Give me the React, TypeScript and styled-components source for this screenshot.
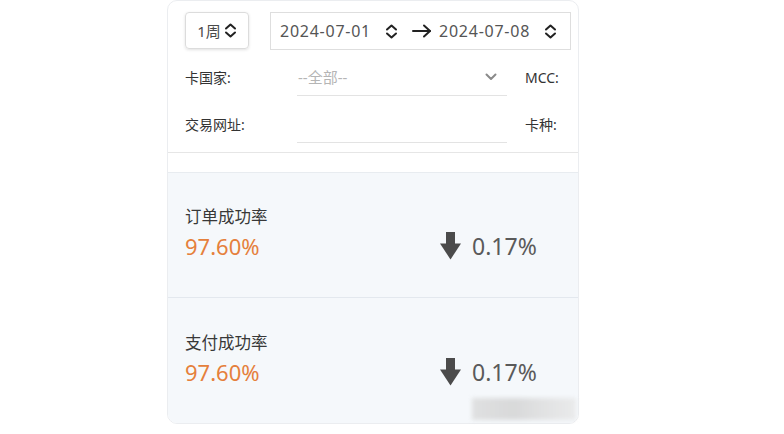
import React from "react";
import styled, { createGlobalStyle } from "styled-components";

const Global = createGlobalStyle`
  html, body { margin: 0; padding: 0; background: #ffffff; }
  body { font-family: "Noto Sans", "Noto Sans CJK SC", sans-serif; color: #333; }
  * { box-sizing: border-box; }
`;

const Page = styled.div`
  width: 784px;
  height: 434px;
  padding-left: 167px;
  position: relative;
  overflow: hidden;
`;

const Card = styled.div`
  width: 412px;
  height: 424px;
  border: 1px solid #ebedf0;
  border-radius: 10px;
  overflow: hidden;
  display: flex;
  flex-direction: column;
  background: #fff;
`;

const Filters = styled.div`
  padding: 11px 6px 9px 17px;
  border-bottom: 1px solid #e6e6e6;
  display: flex;
  flex-direction: column;
  gap: 9px;
`;

const TopRow = styled.div`
  display: flex;
  gap: 21px;
  height: 37px;
`;

const WeekSelect = styled.div`
  width: 64px;
  height: 37px;
  border: 1px solid #dcdcdc;
  border-radius: 4px;
  box-shadow: 0 1px 3px rgba(0, 0, 0, 0.12);
  display: flex;
  align-items: center;
  justify-content: center;
  gap: 3px;
  font-size: 15px;
  color: #4a4a4a;
`;

const DateBox = styled.div`
  width: 301px;
  height: 38px;
  border: 1px solid #dedede;
  display: flex;
  align-items: center;
  padding-left: 9px;
  font-size: 16px;
  color: #555;
`;

const DateText = styled.span<{ $ml?: number }>`
  letter-spacing: 0.75px;
  margin-left: ${(p) => p.$ml ?? 0}px;
`;

const Spin = styled.span<{ $ml: number }>`
  margin-left: ${(p) => p.$ml}px;
  display: inline-flex;
`;

const FieldRow = styled.div`
  display: grid;
  grid-template-columns: 112px 210px 18px auto;
  height: 38px;
  align-items: center;
  font-size: 14px;
  color: #333;
`;

const Label = styled.span``;

const Field = styled.div`
  height: 38px;
  border-bottom: 1px solid #e3e3e3;
  display: flex;
  align-items: center;
  justify-content: space-between;
  padding: 0 10px 0 1px;
  color: #b5b5b5;
  font-size: 15px;
`;

const Spacer = styled.div``;

const Gap = styled.div`
  height: 19px;
  flex: none;
`;

const Stats = styled.div`
  flex: 1;
  background: #f5f8fb;
  border-top: 1px solid #e8ecf0;
  display: flex;
  flex-direction: column;
`;

const StatBlock = styled.div<{ $last?: boolean }>`
  height: ${(p) => (p.$last ? "auto" : "125px")};
  flex: ${(p) => (p.$last ? 1 : "none")};
  border-bottom: ${(p) => (p.$last ? "none" : "1px solid #e3e8ee")};
  display: flex;
  flex-direction: column;
  justify-content: center;
  padding: 0 17px 4px;
  gap: 2px;
`;

const StatLabel = styled.div`
  font-size: 16.5px;
  color: #383838;
  line-height: 24px;
`;

const StatRow = styled.div`
  display: grid;
  grid-template-columns: 255px auto;
  align-items: center;
`;

const StatValue = styled.div`
  font-size: 22px;
  color: #e5803c;
  line-height: 30px;
`;

const Change = styled.div`
  display: flex;
  align-items: center;
  gap: 11px;
  font-size: 23px;
  color: #5a5a5a;
  line-height: 30px;
`;

const Watermark = styled.div`
  position: absolute;
  left: 472px;
  top: 398px;
  width: 104px;
  height: 22px;
  background: linear-gradient(90deg, #d9d9d9, #cfcfcf 40%, #dcdcdc 70%, #e6e6e6);
  filter: blur(2px);
  opacity: 0.75;
`;

const UpDown = () => (
  <svg width="13" height="15" viewBox="0 0 13 15" fill="none" stroke="#222" strokeWidth="2" strokeLinecap="round" strokeLinejoin="round">
    <path d="M2 5.5 L6.5 1.5 L11 5.5" />
    <path d="M2 9.5 L6.5 13.5 L11 9.5" />
  </svg>
);

const ArrowRight = () => (
  <svg width="20" height="14" viewBox="0 0 20 14" fill="none" stroke="#222" strokeWidth="2" strokeLinecap="round" strokeLinejoin="round">
    <path d="M1 7 H18" />
    <path d="M12 1.5 L18 7 L12 12.5" />
  </svg>
);

const ChevronDown = () => (
  <svg width="12" height="8" viewBox="0 0 12 8" fill="none" stroke="#8a8a8a" strokeWidth="2" strokeLinecap="round" strokeLinejoin="round">
    <path d="M1.5 1.5 L6 6 L10.5 1.5" />
  </svg>
);

const DownArrow = () => (
  <svg width="21" height="28" viewBox="0 0 21 28" fill="#4b4b4b">
    <rect x="6" y="0" width="9" height="13" />
    <path d="M0 11.5 H21 L10.5 27.5 Z" />
  </svg>
);

const stats = [
  { label: "订单成功率", value: "97.60%", change: "0.17%" },
  { label: "支付成功率", value: "97.60%", change: "0.17%" },
];

export default function App() {
  return (
    <Page>
      <Global />
      <Card>
        <Filters>
          <TopRow>
            <WeekSelect>
              <span>1周</span>
              <UpDown />
            </WeekSelect>
            <DateBox>
              <DateText>2024-07-01</DateText>
              <Spin $ml={14}>
                <UpDown />
              </Spin>
              <Spin $ml={14}>
                <ArrowRight />
              </Spin>
              <DateText $ml={7}>2024-07-08</DateText>
              <Spin $ml={14}>
                <UpDown />
              </Spin>
            </DateBox>
          </TopRow>
          <FieldRow>
            <Label>卡国家:</Label>
            <Field>
              <span>--全部--</span>
              <ChevronDown />
            </Field>
            <Spacer />
            <Label>MCC:</Label>
          </FieldRow>
          <FieldRow>
            <Label>交易网址:</Label>
            <Field />
            <Spacer />
            <Label>卡种:</Label>
          </FieldRow>
        </Filters>
        <Gap />
        <Stats>
          {stats.map((s, i) => (
            <StatBlock key={i} $last={i === stats.length - 1}>
              <StatLabel>{s.label}</StatLabel>
              <StatRow>
                <StatValue>{s.value}</StatValue>
                <Change>
                  <DownArrow />
                  <span>{s.change}</span>
                </Change>
              </StatRow>
            </StatBlock>
          ))}
        </Stats>
      </Card>
      <Watermark />
    </Page>
  );
}
